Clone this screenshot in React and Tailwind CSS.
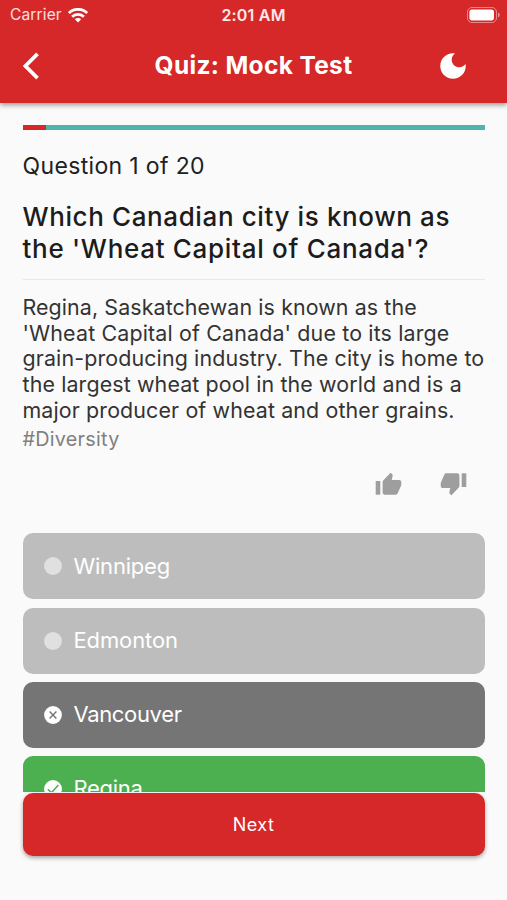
import clsx from 'clsx';

const ANSWERS = [
  { label: 'Winnipeg', state: 'idle', text: 'tracking-[-0.2px]' },
  { label: 'Edmonton', state: 'idle', text: 'tracking-[-0.12px]' },
  { label: 'Vancouver', state: 'wrong', text: 'tracking-[-0.35px]' },
  { label: 'Regina', state: 'correct', text: 'tracking-[-0.3px]' },
];

const EXPLANATION = [
  { text: 'Regina, Saskatchewan is known as the', className: 'tracking-[0.1px]' },
  { text: "'Wheat Capital of Canada' due to its large", className: 'tracking-[0.16px]' },
  { text: 'grain-producing industry. The city is home to', className: 'tracking-[0.14px]' },
  { text: 'the largest wheat pool in the world and is a', className: 'tracking-[0.13px]' },
  { text: 'major producer of wheat and other grains.', className: 'tracking-[0.13px]' },
];

function WifiIcon() {
  return (
    <svg viewBox="0 0 20 15" className="h-[15px] w-5" fill="none" stroke="#fff">
      <path d="M0.9 5.1a13 13 0 0 1 18.2 0" strokeWidth="2.8" />
      <path d="M4.1 8.7a8.4 8.4 0 0 1 11.8 0" strokeWidth="2.8" />
      <path d="M10 14.4l-3.2-3.2a4.6 4.6 0 0 1 6.4 0z" fill="#fff" stroke="none" />
    </svg>
  );
}

function BatteryIcon() {
  return (
    <svg viewBox="0 0 33 16" className="h-4 w-[33px]">
      <rect x="0.5" y="0.5" width="29" height="15" rx="4.5" fill="none" stroke="#fff" strokeOpacity="0.45" />
      <rect x="2.4" y="2.4" width="24.6" height="11" rx="2.6" fill="#fff" />
      <path d="M31 5.5v5c1.1-.4 1.7-1.3 1.7-2.5S32.1 5.9 31 5.5z" fill="#fff" fillOpacity="0.5" />
    </svg>
  );
}

function ThumbIcon({ down }) {
  return (
    <svg viewBox="0 0 27 24" className={clsx('h-6 w-[27px]', down && 'rotate-180')} fill="currentColor">
      <path d="M0.7 9h4.6v13.7H0.7z" />
      <path d="M7.6 9.9c0-.6.2-1 .6-1.5L15.500.7l1.600 1.400c.5.500.7 1.100.500 1.800L16.700 8h7.400c1.300 0 2.200.9 2.200 2.100v2.300c0 .4-.1.7-.2 1l-3.400 7.900c-.4.9-1.100 1.400-2.100 1.400H9.800c-1.300 0-2.200-.9-2.200-2.100z" />
    </svg>
  );
}

function StateIcon({ state }) {
  if (state === 'idle') {
    return <span className="h-[18px] w-[18px] rounded-full bg-[#e0e0e0]" />;
  }
  return (
    <svg viewBox="0 0 18 18" className="h-[18px] w-[18px]" fill="none">
      <circle cx="9" cy="9" r="8.9" fill="#fff" />
      {state === 'wrong' ? (
        <path d="M5.6 5.6l6.8 6.8m0-6.8l-6.8 6.8" stroke="#757575" strokeWidth="1.4" />
      ) : (
        <path d="M3.8 9.2l3.7 3.5L14.4 5" stroke="#4caf50" strokeWidth="1.5" />
      )}
    </svg>
  );
}

function Answer({ label, state, text }) {
  return (
    <div
      className={clsx(
        'flex h-[66px] shrink-0 items-center gap-3 rounded-[10px] pl-[21px] text-[22px] text-white',
        state === 'idle' && 'bg-[#bdbdbd]',
        state === 'wrong' && 'bg-[#757575]',
        state === 'correct' && 'bg-[#4caf50]'
      )}
    >
      <StateIcon state={state} />
      <span className={text}>{label}</span>
    </div>
  );
}

export default function App() {
  return (
    <div className="flex h-[900px] w-[507px] flex-col overflow-hidden bg-[#fafafa] font-['Inter','Liberation_Sans',sans-serif] whitespace-nowrap">
      <header className="z-10 h-[103px] shrink-0 bg-[#d62828] text-white shadow-[0_2px_5px_rgba(0,0,0,0.4)]">
        <div className="grid h-[30px] grid-cols-3 items-center px-[10px] text-[15.5px]">
          <div className="flex items-center gap-[6px] text-white/85">
            <span className="tracking-[0.15px]">Carrier</span>
            <WifiIcon />
          </div>
          <span className="text-center text-[16px] font-semibold tracking-[0.2px] text-white/90">2:01 AM</span>
          <div className="-mr-[3px] flex justify-end">
            <BatteryIcon />
          </div>
        </div>
        <div className="flex h-[71px] items-center justify-between pr-[37px] pl-[23px]">
          <svg viewBox="0 0 12 24" className="h-[32px] w-4" fill="currentColor" stroke="currentColor" strokeWidth="0.4">
            <path d="M11.67 3.87L9.9 2.1 0 12l9.9 9.9 1.77-1.77L3.54 12z" />
          </svg>
          <h1 className="pl-[32px] text-[24.5px] leading-[35px] font-bold tracking-[0.33px]">Quiz: Mock Test</h1>
          <svg viewBox="0 0 24 24" className="h-[34px] w-[34px]" fill="currentColor">
            <path d="M12 3c-4.97 0-9 4.03-9 9s4.03 9 9 9 9-4.03 9-9c0-.46-.04-.92-.1-1.36-.98 1.37-2.58 2.26-4.4 2.26-2.98 0-5.4-2.42-5.4-5.4 0-1.81.89-3.42 2.26-4.4-.44-.06-.9-.1-1.36-.1z" />
          </svg>
        </div>
      </header>

      <main className="flex min-h-0 flex-1 flex-col px-[22.5px] pt-[22px]">
        <div className="h-[5px] shrink-0 bg-[#4db6ac]">
          <div className="h-full w-[5%] bg-[#d62828]" />
        </div>

        <p className="mt-[22px] text-[23px] leading-[28px] tracking-[0.35px] text-[#212121]">Question 1 of 20</p>
        <h2 className="mt-[21px] text-[26px] leading-[32px] font-[450] text-[#1c1c1c]">
          <span className="block tracking-[0.61px]">Which Canadian city is known as</span>
          <span className="block tracking-[0.7px]">the 'Wheat Capital of Canada'?</span>
        </h2>
        <hr className="mt-[14px] border-[#e8e8e8]" />

        <div className="mt-[15px] text-[21.4px] leading-[25.7px] text-[#333]">
          {EXPLANATION.map((line) => (
            <p key={line.text}>
              <span className={line.className}>{line.text}</span>
            </p>
          ))}
        </div>
        <p className="mt-[2px] text-[19.8px] leading-[26px] tracking-[0.25px] text-[#808080]">#Diversity</p>

        <div className="mt-[18px] flex h-[28px] items-center justify-end gap-[37.5px] pr-[18px] text-[#9e9e9e]">
          <ThumbIcon />
          <ThumbIcon down />
        </div>

        <div className="mt-[35.8px] flex h-[258.7px] shrink-0 flex-col gap-[8.2px] overflow-hidden">
          {ANSWERS.map((answer) => (
            <Answer key={answer.label} {...answer} />
          ))}
        </div>
        <button className="mt-[1px] h-[63px] shrink-0 rounded-[10px] bg-[#d62828] text-lg tracking-[0.5px] text-white shadow-[0_2px_4px_rgba(0,0,0,0.35)]">
          Next
        </button>
      </main>
    </div>
  );
}
